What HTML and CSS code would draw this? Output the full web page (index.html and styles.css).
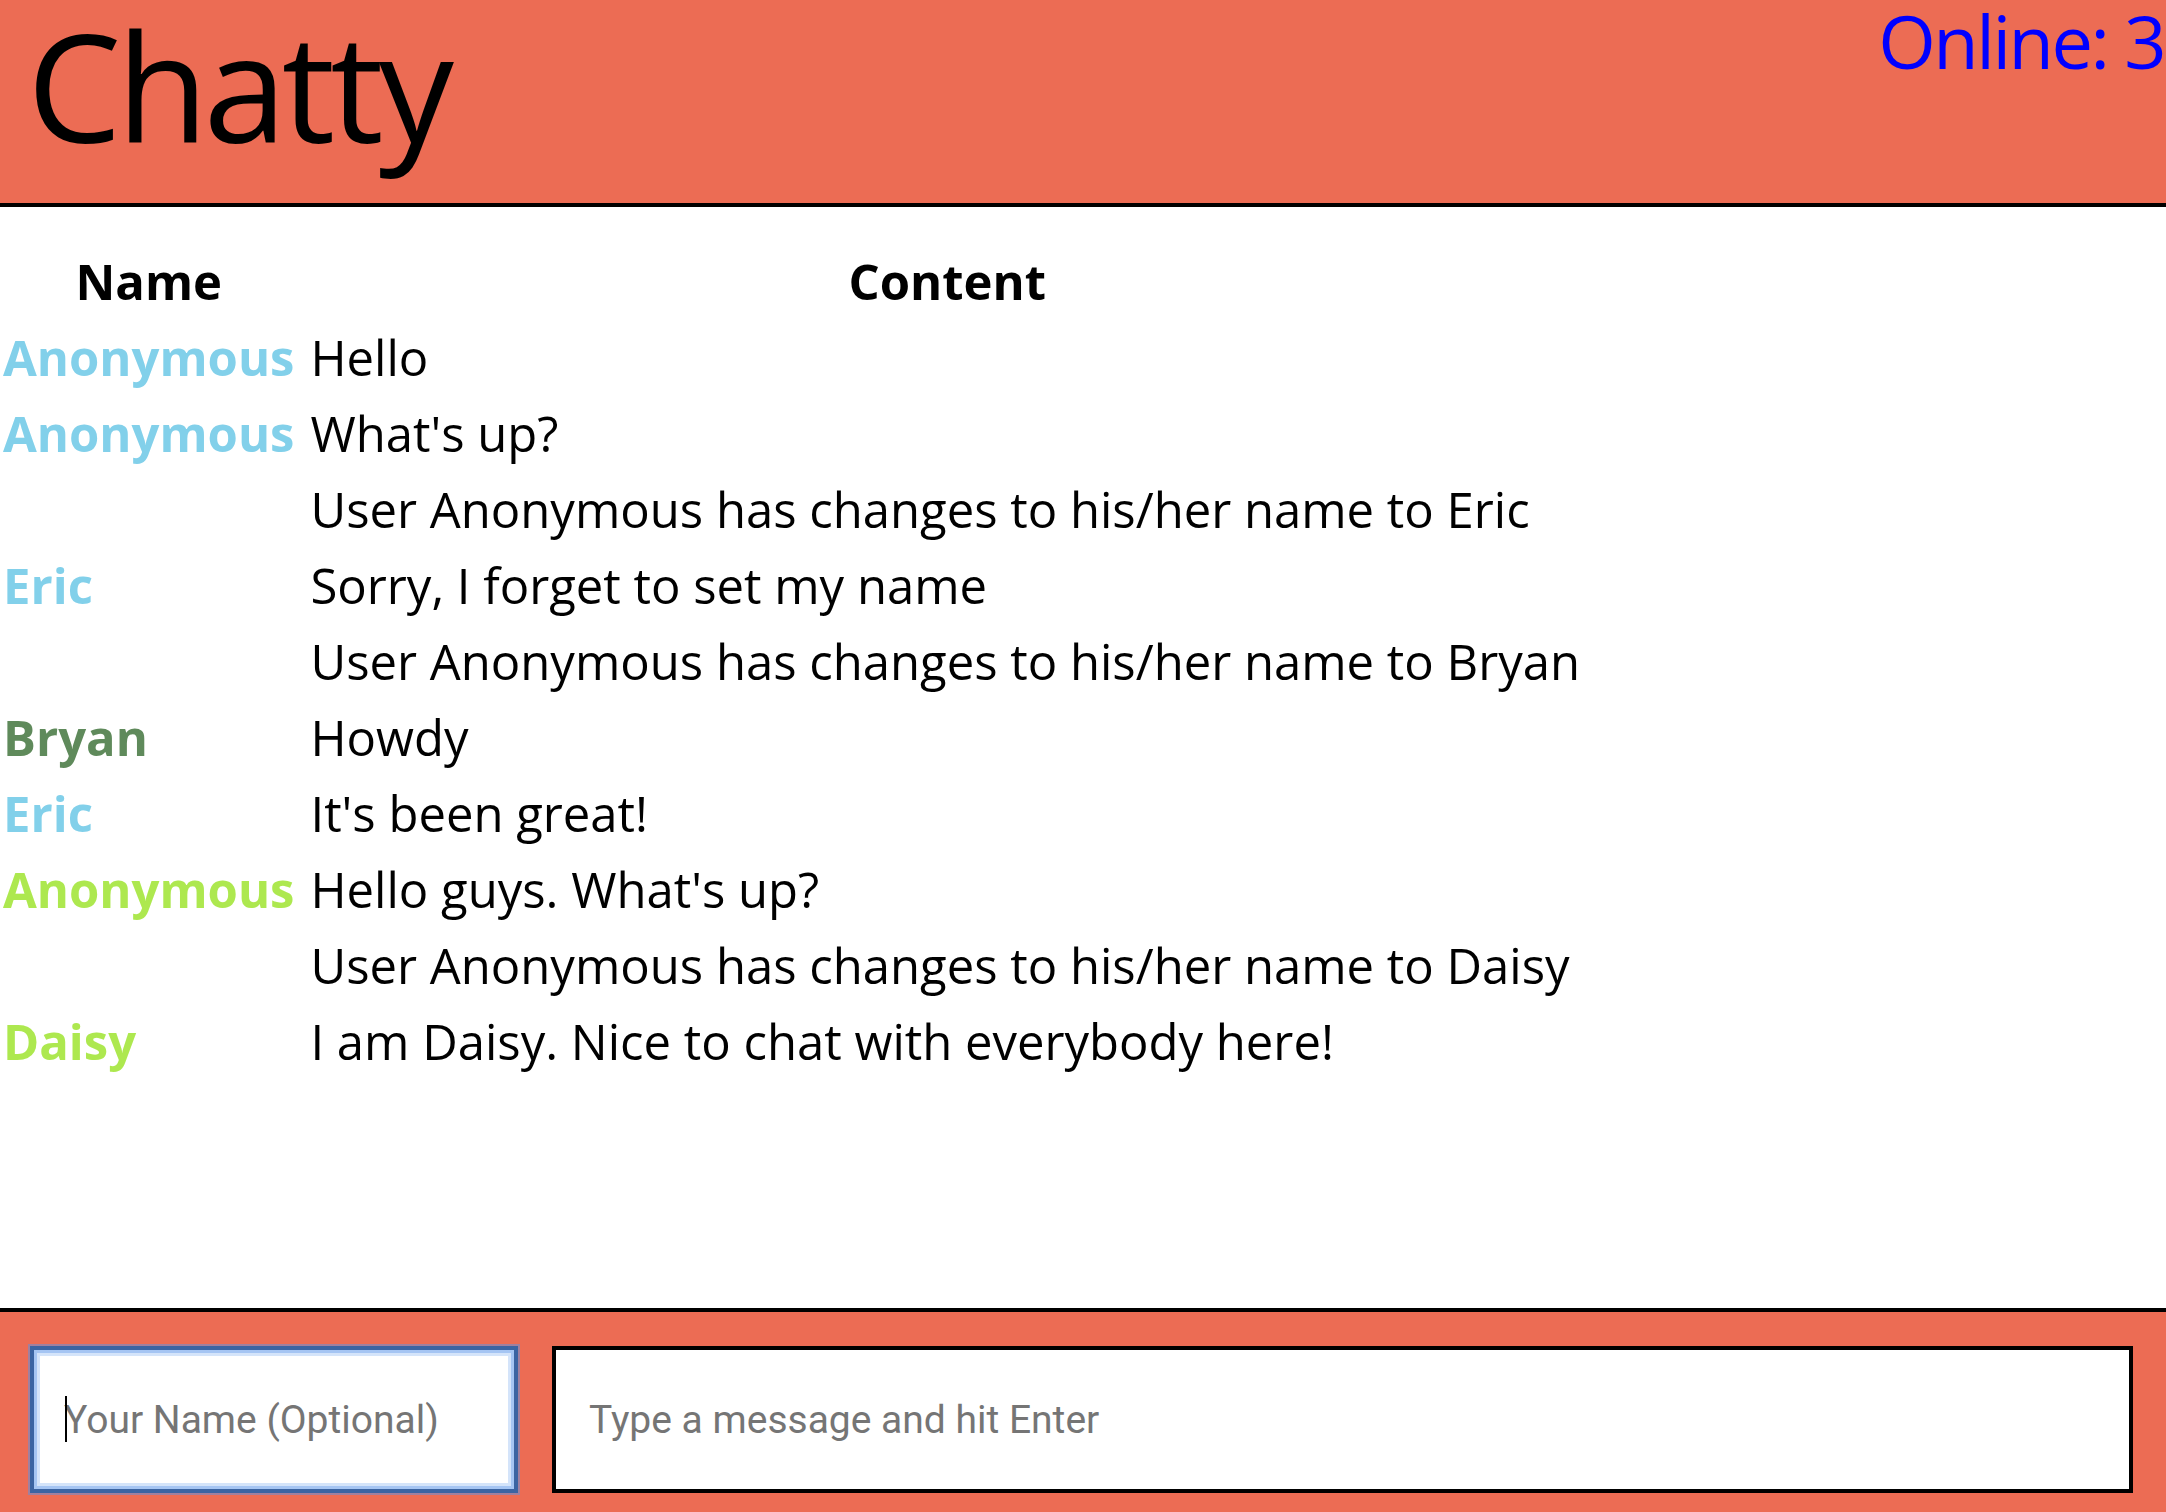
FILE: index.html
```html
<!DOCTYPE html>
<html>
<head>
<meta charset="utf-8">
<title>Chatty</title>
<link rel="stylesheet" href="styles.css">
</head>
<body>
<div class="app">
  <header class="topbar">
    <h1 class="brand">Chatty</h1>
    <div class="online">Online: 3</div>
  </header>
  <main class="messages">
    <table class="chat">
      <thead>
        <tr><th class="col-name">Name</th><th class="col-content">Content</th></tr>
      </thead>
      <tbody>
        <tr><td class="user sky">Anonymous</td><td class="text">Hello</td></tr>
        <tr><td class="user sky">Anonymous</td><td class="text">What's up?</td></tr>
        <tr><td class="user"></td><td class="text">User Anonymous has changes to his/her name to Eric</td></tr>
        <tr><td class="user sky">Eric</td><td class="text">Sorry, I forget to set my name</td></tr>
        <tr><td class="user"></td><td class="text">User Anonymous has changes to his/her name to Bryan</td></tr>
        <tr><td class="user moss">Bryan</td><td class="text">Howdy</td></tr>
        <tr><td class="user sky">Eric</td><td class="text">It's been great!</td></tr>
        <tr><td class="user lime">Anonymous</td><td class="text">Hello guys. What's up?</td></tr>
        <tr><td class="user"></td><td class="text">User Anonymous has changes to his/her name to Daisy</td></tr>
        <tr><td class="user lime">Daisy</td><td class="text">I am Daisy. Nice to chat with everybody here!</td></tr>
      </tbody>
    </table>
  </main>
  <footer class="composer">
    <div class="name-wrap">
      <input class="field name-field" type="text" placeholder="Your Name (Optional)">
      <span class="caret"></span>
    </div>
    <input class="field msg-field" type="text" placeholder="Type a message and hit Enter">
  </footer>
</div>
</body>
</html>
```

FILE: styles.css
```css
html, body {
  margin: 0;
  padding: 0;
  background: #ffffff;
}

body {
  font-family: "Open Sans", "Noto Sans", sans-serif;
  color: #000;
}

.app {
  display: flex;
  flex-direction: column;
  height: 100vh;
  overflow: hidden;
}

.topbar {
  display: flex;
  justify-content: space-between;
  align-items: flex-start;
  height: 203px;
  background: #ec6c54;
  border-bottom: 4px solid #000;
  flex: none;
}

.brand {
  margin: 0;
  padding: 10px 0 0 27px;
  font-size: 150px;
  font-weight: 400;
  line-height: 1;
  letter-spacing: -5px;
}

.online {
  font-size: 74px;
  line-height: 1;
  color: #0000ff;
  padding-top: 4px;
  margin-right: 2px;
  letter-spacing: -2.5px;
}

.messages {
  flex: 1;
  padding-top: 36px;
}

.chat {
  border-collapse: separate;
  border-spacing: 0;
  font-size: 49px;
  line-height: 76px;
}

.chat th,
.chat td {
  padding: 0;
  white-space: nowrap;
}

.chat th {
  font-weight: 700;
  text-align: center;
}

.col-name,
.user {
  padding-left: 3px !important;
  padding-right: 16px !important;
}

.user {
  font-weight: 700;
  text-align: left;
}

.text {
  font-weight: 400;
  padding-right: 4px !important;
}

.sky { color: #82d0ea; }
.moss { color: #5f8a5b; }
.lime { color: #ade84f; }

.composer {
  flex: none;
  height: 204px;
  box-sizing: border-box;
  background: #ec6c54;
  border-top: 4px solid #000;
  display: flex;
  align-items: flex-start;
  gap: 34px;
  padding: 34px 33px 0 30px;
}

.name-wrap {
  position: relative;
  width: 488px;
  flex: none;
}

.field {
  display: block;
  box-sizing: border-box;
  height: 147px;
  margin: 0;
  background: #fff;
  font-family: "Roboto", "Liberation Sans", sans-serif;
  font-size: 39px;
  color: #222;
  outline: none;
}

.field::placeholder {
  color: #757575;
}

.name-field {
  width: 100%;
  border: 4px solid #3b64a2;
  padding: 0 0 0 30px;
  box-shadow: 0 0 0 2px rgba(120, 140, 200, 0.65), inset 0 0 0 3px #a5c5f3, inset 0 0 0 6px #d4e4fa;
}

.msg-field {
  flex: 1;
  min-width: 0;
  border: 4px solid #000;
  padding: 0 0 0 33px;
}

.caret {
  position: absolute;
  left: 35px;
  top: 50px;
  width: 2px;
  height: 46px;
  background: #000;
}
```
